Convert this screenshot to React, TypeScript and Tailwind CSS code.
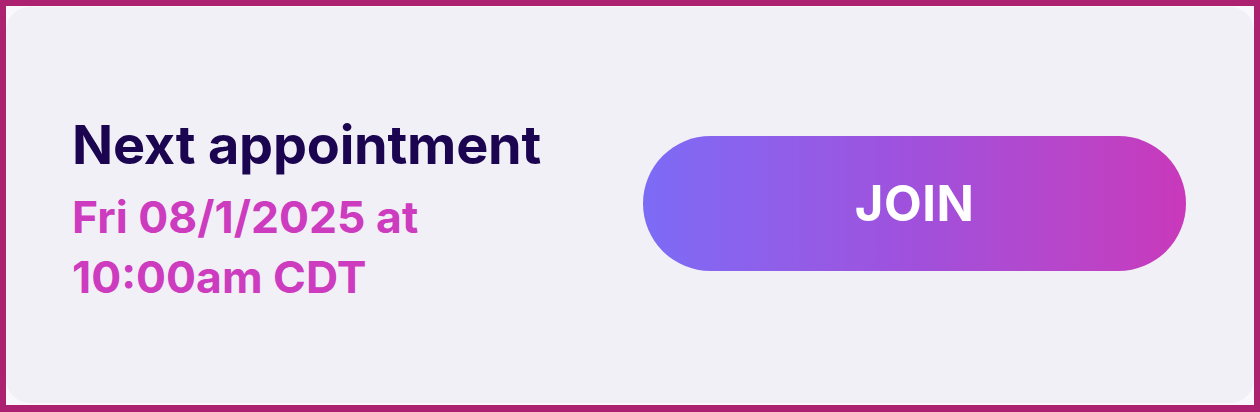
export default function App() {
  return (
    <div className="w-[1260px] h-[412px] border-x-[6px] border-t-[6px] border-b-[7px] border-[#ad2270] bg-[#f9f8fc] pt-px pb-[2px]">
      <div
        className="h-full rounded-[24px] bg-[#f2f0f7] flex items-center justify-between pl-[66px] pr-[68px]"
        style={{ fontFamily: "Inter, 'Noto Sans', sans-serif" }}
      >
        <div className="flex flex-col pt-[11px]">
          <h2 className="text-[54px] leading-[60px] font-bold text-[#1c0550] tracking-[-0.2px]">
            Next appointment
          </h2>
          <p className="text-[44.5px] leading-[60px] font-bold text-[#cd3bbf] w-[400px] mt-[12px]">
            Fri 08/1/2025 at 10:00am CDT
          </p>
        </div>
        <button className="w-[543px] h-[135px] -mt-[3px] rounded-full bg-gradient-to-r from-[#7c6bf6] via-[#a050dc] to-[#c938bb] text-white text-[49px] font-bold tracking-[0.5px] flex items-center justify-center">
          JOIN
        </button>
      </div>
    </div>
  );
}
